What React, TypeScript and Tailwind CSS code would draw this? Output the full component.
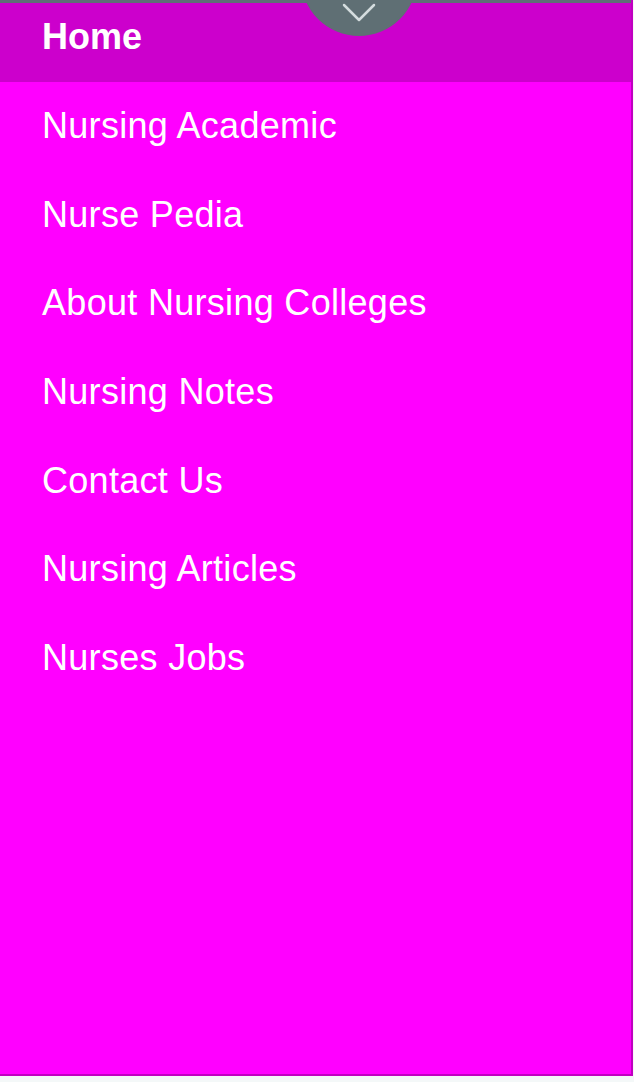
const links = [
  'Nursing Academic',
  'Nurse Pedia',
  'About Nursing Colleges',
  'Nursing Notes',
  'Contact Us',
  'Nursing Articles',
  'Nurses Jobs',
];

export default function App() {
  return (
    <div className="w-[634px] h-[1082px] bg-[#f4f8f8] font-['Liberation_Sans',Arial,sans-serif]">
      <div className="relative overflow-hidden w-[633px] h-[1076px] bg-[#ff00ff] border-r-2 border-b-2 border-[#c000c0] flex flex-col">
        <div className="h-[3px] bg-[#5f6f76]" />
        {/* active item */}
        <div className="h-[79px] bg-[#cc00cc] pl-[42px] pt-[14px]">
          <span className="text-[36px] leading-[40px] font-bold text-white">Home</span>
        </div>
        <nav className="flex flex-col">
          {links.map((label) => (
            <a
              key={label}
              href="#"
              className="h-[88.6px] flex items-center pl-[42px] text-[36px] leading-[40px] tracking-[0.3px] text-white"
            >
              {label}
            </a>
          ))}
        </nav>
        {/* pull-down tab */}
        <div className="absolute left-[301px] top-[-80px] w-[116px] h-[116px] bg-[#5f6f74] rounded-full flex justify-center items-end pb-[14px]">
          <svg width="34" height="19" viewBox="0 0 34 19" fill="none">
            <path d="M2 2 L17 17 L32 2" stroke="#d4dcde" strokeWidth="2.5" strokeLinecap="round" strokeLinejoin="round" />
          </svg>
        </div>
      </div>
    </div>
  );
}
